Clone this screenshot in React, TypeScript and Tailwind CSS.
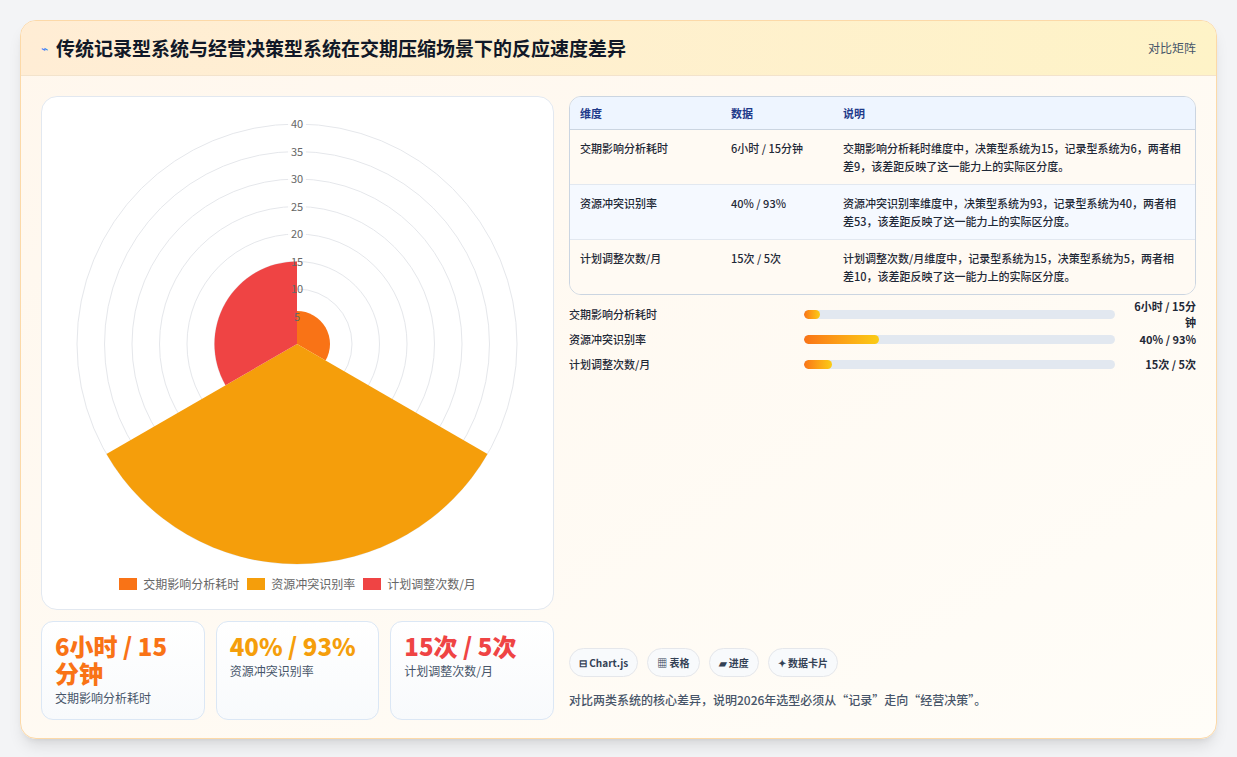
const F = { fontFamily: '"Noto Sans CJK SC", "Noto Sans", sans-serif' };

const rows = [
  { k: "交期影响分析耗时", v: "6小时 / 15分钟", d: "交期影响分析耗时维度中，决策型系统为15，记录型系统为6，两者相差9，该差距反映了这一能力上的实际区分度。" },
  { k: "资源冲突识别率", v: "40% / 93%", d: "资源冲突识别率维度中，决策型系统为93，记录型系统为40，两者相差53，该差距反映了这一能力上的实际区分度。" },
  { k: "计划调整次数/月", v: "15次 / 5次", d: "计划调整次数/月维度中，记录型系统为15，决策型系统为5，两者相差10，该差距反映了这一能力上的实际区分度。" },
];

function arc(cx: number, cy: number, r: number, a0: number, a1: number) {
  const p = (a: number) => [cx + r * Math.cos((a * Math.PI) / 180), cy + r * Math.sin((a * Math.PI) / 180)];
  const [x0, y0] = p(a0);
  const [x1, y1] = p(a1);
  return `M${cx},${cy} L${x0},${y0} A${r},${r} 0 0 1 ${x1},${y1} Z`;
}

function Polar() {
  const cx = 256, cy = 239, u = 5.5;
  return (
    <svg width="513" height="470" className="block">
      {[1, 2, 3, 4, 5, 6, 7, 8].map((i) => (
        <circle key={i} cx={cx} cy={cy} r={i * 5 * u} fill="none" stroke="#e5e7eb" strokeWidth="1" />
      ))}
      <path d={arc(cx, cy, 6 * u, -90, 30)} fill="#f97316" />
      <path d={arc(cx, cy, 40 * u, 30, 150)} fill="#f59e0b" />
      <path d={arc(cx, cy, 15 * u, 150, 270)} fill="#ef4444" />
      {[1, 2, 3, 4, 5, 6, 7, 8].map((i) => (
        <g key={i}>
          <rect x={cx - 9} y={cy - i * 5 * u - 7} width="18" height="13" fill="white" opacity={i <= 3 ? 0 : 0.85} />
          <text x={cx} y={cy - i * 5 * u + 4} textAnchor="middle" fontSize="11" fill="#666" style={F}>{i * 5}</text>
        </g>
      ))}
    </svg>
  );
}

const bars = [
  { k: "交期影响分析耗时", v: "6小时 / 15分钟", w: "5%" },
  { k: "资源冲突识别率", v: "40% / 93%", w: "24%" },
  { k: "计划调整次数/月", v: "15次 / 5次", w: "9%" },
];

export default function App() {
  return (
    <div className="min-h-screen bg-[#f3f4f6] p-5" style={F}>
      <div className="rounded-2xl border border-[#fcd9a8] overflow-hidden bg-gradient-to-br from-[#fff7ed] to-[#fffdf8] shadow-lg">
        <div className="h-[55px] flex items-center justify-between px-5 bg-gradient-to-r from-[#ffedd5] to-[#fef3c7] border-b border-[#f3e3cc]">
          <div className="flex items-center gap-2">
            <span className="text-[#3b82f6] text-xs">⌁</span>
            <h1 className="text-[19px] font-bold text-[#111827]">传统记录型系统与经营决策型系统在交期压缩场景下的反应速度差异</h1>
          </div>
          <span className="text-xs text-[#475569]">对比矩阵</span>
        </div>
        <div className="flex gap-[15px] p-5 pb-[18px]">
          <div className="w-[513px] flex flex-col gap-[11px]">
            <div className="h-[514px] rounded-2xl border border-[#e2e8f0] bg-white flex flex-col items-center pt-[8px]">
              <Polar />
              <div className="flex items-center gap-2 text-xs text-[#666] mt-[1px]">
                <span className="flex items-center gap-1.5"><span className="w-[18px] h-[12px] bg-[#f97316]" />交期影响分析耗时</span>
                <span className="flex items-center gap-1.5"><span className="w-[18px] h-[12px] bg-[#f59e0b]" />资源冲突识别率</span>
                <span className="flex items-center gap-1.5"><span className="w-[18px] h-[12px] bg-[#ef4444]" />计划调整次数/月</span>
              </div>
            </div>
            <div className="grid grid-cols-3 gap-[11px]">
              {[
                { v: "6小时 / 15分钟", l: "交期影响分析耗时", c: "text-[#f97316]" },
                { v: "40% / 93%", l: "资源冲突识别率", c: "text-[#f59e0b]" },
                { v: "15次 / 5次", l: "计划调整次数/月", c: "text-[#ef4444]" },
              ].map((s) => (
                <div key={s.l} className="h-[99px] rounded-xl border border-[#dbe7f5] bg-gradient-to-b from-white to-[#f8fafc] px-[13px] pt-[10px]">
                  <div className={`text-[24px] font-extrabold leading-[27px] ${s.c}`}>{s.v}</div>
                  <div className="text-xs text-[#475569] mt-1">{s.l}</div>
                </div>
              ))}
            </div>
          </div>
          <div className="flex-1 flex flex-col">
            <div className="rounded-xl border border-[#cbd5e1] overflow-hidden text-[11px]">
              <div className="grid grid-cols-[151px_112px_1fr] h-[33px] items-center bg-[#eef5ff] border-b border-[#cbd5e1] px-[10px] font-semibold text-[#1e3a8a]">
                <span>维度</span><span>数据</span><span>说明</span>
              </div>
              {rows.map((r, i) => (
                <div key={r.k} className={`grid grid-cols-[151px_112px_1fr] px-[10px] py-[9px] text-[#1f2937] leading-[18px] ${i < 2 ? "border-b border-[#e2e8f0]" : ""} ${i === 1 ? "bg-[#f5f9ff]" : "bg-[#fffaf3]"}`}>
                  <span className="font-medium">{r.k}</span>
                  <span className="font-medium">{r.v}</span>
                  <span className="font-medium">{r.d}</span>
                </div>
              ))}
            </div>
            <div className="flex flex-col gap-[9px] mt-[11px] text-[11px] font-semibold text-[#1f2937]">
              {bars.map((b) => (
                <div key={b.k} className="flex items-center gap-[9px] h-[16px]">
                  <span className="w-[226px] font-medium">{b.k}</span>
                  <div className="flex-1 h-[9px] rounded-full bg-[#e2e8f0] overflow-hidden">
                    <div className="h-full rounded-full bg-gradient-to-r from-[#f97316] to-[#facc15]" style={{ width: b.w }} />
                  </div>
                  <span className="w-[72px] text-right">{b.v}</span>
                </div>
              ))}
            </div>
            <div className="flex-1" />
            <div className="flex gap-[9px] text-[10px] font-semibold text-[#334155]">
              {["⊟ Chart.js", "▦ 表格", "▰ 进度", "✦ 数据卡片"].map((t) => (
                <span key={t} className="rounded-full border border-[#e5e7eb] bg-[#f8fafc] px-[9px] py-[6px]">{t}</span>
              ))}
            </div>
            <p className="text-xs font-medium text-[#475569] mt-[15px] mb-[12px]">对比两类系统的核心差异，说明2026年选型必须从“记录”走向“经营决策”。</p>
          </div>
        </div>
      </div>
    </div>
  );
}
